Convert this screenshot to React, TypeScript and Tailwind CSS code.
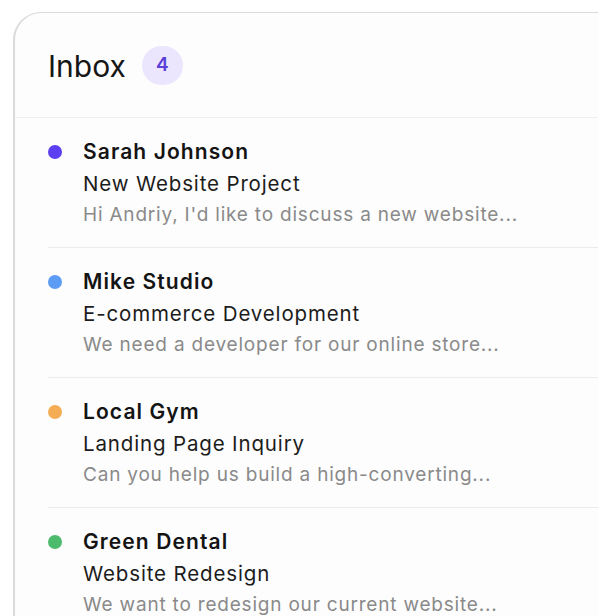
import React from "react";

type Message = {
  from: string;
  subject: string;
  preview: string;
  dot: string;
};

const messages: Message[] = [
  {
    from: "Sarah Johnson",
    subject: "New Website Project",
    preview: "Hi Andriy, I'd like to discuss a new website...",
    dot: "bg-[#5b3ff0]",
  },
  {
    from: "Mike Studio",
    subject: "E-commerce Development",
    preview: "We need a developer for our online store...",
    dot: "bg-[#5c9cf4]",
  },
  {
    from: "Local Gym",
    subject: "Landing Page Inquiry",
    preview: "Can you help us build a high-converting...",
    dot: "bg-[#f4ad55]",
  },
  {
    from: "Green Dental",
    subject: "Website Redesign",
    preview: "We want to redesign our current website...",
    dot: "bg-[#4dbb6c]",
  },
];

function MessageRow({ m, last }: { m: Message; last: boolean }) {
  return (
    <div className={`flex items-start pt-[18px] pb-[17px] ${last ? "" : "border-b border-[#ececec]"}`}>
      <div className="w-[35px] shrink-0 h-[32px] flex items-center">
        <span className={`block w-[14px] h-[14px] rounded-full ${m.dot}`} />
      </div>
      <div className="flex flex-col">
        <div className="text-[21px] leading-[32px] font-semibold text-[#141414] tracking-[1.1px]">{m.from}</div>
        <div className="text-[20.5px] leading-[31px] text-[#1c1c1c] tracking-[0.85px]">{m.subject}</div>
        <div className="text-[19px] leading-[31px] text-[#8a8a8a] tracking-[0.8px]">{m.preview}</div>
      </div>
    </div>
  );
}

export default function App() {
  return (
    <div
      className="w-[598px] h-[616px] overflow-hidden bg-white pt-[12px] pl-[13px]"
      style={{ fontFamily: "Inter, 'Noto Sans', sans-serif" }}
    >
      <div className="w-[640px] h-[700px] rounded-tl-[28px] border-l-2 border-t-[1.5px] border-[#dadada] bg-[#fdfdfd]">
        <div className="h-[105px] flex items-center pl-[33px] border-b border-[#efefef]">
          <span className="text-[30px] text-[#161616] pt-[3px]">Inbox</span>
          <span className="ml-[16px] w-[41px] h-[39px] rounded-full bg-[#ebe6fd] flex items-center justify-center text-[19px] font-semibold text-[#5a3fd8]">
            4
          </span>
        </div>
        <div className="ml-[33px]">
          {messages.map((m, i) => (
            <MessageRow key={m.from} m={m} last={i === messages.length - 1} />
          ))}
        </div>
      </div>
    </div>
  );
}
